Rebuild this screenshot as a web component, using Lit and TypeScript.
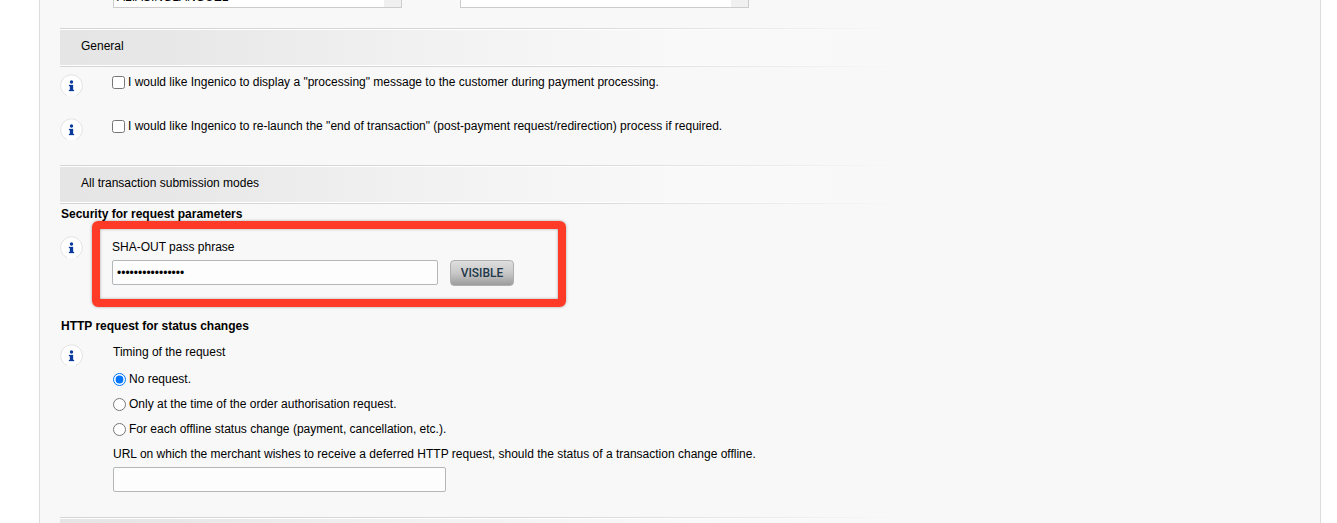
import { LitElement, html, css } from "lit";
import { customElement, property, state } from "lit/decorators.js";

@customElement("info-button")
class InfoButton extends LitElement {
  static styles = css`
    :host { display: block; width: 24px; height: 24px; }
    .info { display: block; width: 24px; height: 24px; padding: 0; border: 0; background: none; cursor: pointer; }
    svg { display: block; }
  `;
  @property() label = "Information";
  render() {
    return html`<button class="info" type="button" aria-label=${this.label}>
      <svg width="24" height="24" viewBox="0 0 24 24">
        <path d="M7 21.8A11 11 0 1 1 16 21.8Z" fill="#fff" />
        <path d="M7 21.5A10.8 10.8 0 1 1 16 21.5" fill="none" stroke="#e2e2e2" />
        <circle cx="11.5" cy="8" r="1.7" fill="#0a3b9c" />
        <path d="M9 11h4v5h1v1H9v-1h1v-4H9z" fill="#0a3b9c" stroke="#0a3b9c" stroke-width=".3" />
      </svg>
    </button>`;
  }
}

@customElement("section-bar")
class SectionBar extends LitElement {
  static styles = css`
    :host { display: block; }
    .bar {
      max-width: 840px; height: 39px; box-sizing: border-box; padding: 2px 0;
      background:
        linear-gradient(90deg, #d4d4d4 0%, #d8d8d8 60%, #f8f8f8 100%) top / 100% 1px no-repeat,
        linear-gradient(90deg, #d4d4d4 0%, #d8d8d8 60%, #f8f8f8 100%) bottom / 100% 1px no-repeat,
        linear-gradient(90deg, #fff 60%, #f8f8f8 100%);
    }
    .title {
      margin: 0; height: 35px; padding-left: 21px; font-size: 12px; font-weight: 400; line-height: 32px;
      background: linear-gradient(90deg, #e5e5e5 0%, #e7e7e7 12%, #f2f2f2 45%, #f9f9f9 75%, #f8f8f8 100%);
    }
  `;
  @property() heading = "";
  render() {
    return html`<div class="bar"><h2 class="title">${this.heading}</h2></div>`;
  }
}

@customElement("app-root")
class AppRoot extends LitElement {
  static styles = css`
    :host {
      display: block; height: 100vh; overflow: hidden; background: #fff; color: #000;
      font: 12px/16px "Liberation Sans", Arial, sans-serif;
    }
    .panel {
      min-height: 100vh; margin: 0 16px 0 39px; padding: 0 20px; box-sizing: border-box;
      border: solid #dcdcdc; border-width: 0 1px; background: #f8f8f8;
    }
    .lists { display: flex; align-items: flex-end; gap: 58px; height: 8px; margin: 0 0 20px 53px; overflow: hidden; }
    .list {
      flex: none; width: 289px; height: 80px; box-sizing: border-box; padding: 61px 0 0; border: 1px solid #ccc;
      border-radius: 0; overflow: hidden; outline: 0; font: inherit; color: #000;
      background: linear-gradient(#f0f0f0, #f0f0f0) right / 17px 100% no-repeat, #fff;
    }
    .list option { padding: 0 3px; line-height: 16px; min-height: 16px; }
    .row { display: grid; grid-template-columns: 24px 1fr; column-gap: 28px; align-items: start; }
    .check { height: 44px; }
    .checks { padding: 7px 0 3px; }
    .option { display: flex; align-items: flex-start; gap: 3px; }
    .option input { width: 13px; height: 13px; margin: 2px 0 0; flex: none; }
    .subhead { margin: 2px 0 0; padding-left: 1px; font-size: 12px; line-height: 16px; font-weight: 700; }
    .security { padding: 14px 0 0; }
    .marked { position: relative; padding-top: 3px; }
    .marked::before {
      content: ""; position: absolute; left: -20px; top: -15px; width: 474px; height: 86px; box-sizing: border-box;
      border: 8px solid #ff3b28; border-radius: 6px; pointer-events: none;
      box-shadow: 0 0 3px rgba(0, 0, 0, .35), inset 0 0 3px rgba(0, 0, 0, .35);
    }
    .label { display: block; }
    .phrase { display: flex; gap: 12px; align-items: flex-start; margin-top: 5px; }
    .text {
      width: 326px; height: 25px; box-sizing: border-box; border: 1px solid #b4b7b9; border-radius: 2px;
      padding: 0 4px; background: #fdfdfd; font: inherit; color: #000;
    }
    .url { display: block; width: 333px; margin-top: 5px; }
    .visible {
      min-width: 64px; height: 26px; padding: 0 8px; border: 1px solid #b0b0b0; border-radius: 4px;
      background: linear-gradient(#dedede, #c8c8c8 50%, #9c9c9c); color: #22384a;
      font: 500 12px/16px Roboto, sans-serif;
    }
    .http { margin-top: 32px; }
    .timing { padding: 10px 0 0; }
    .fields { padding-left: 1px; }
    fieldset { margin: 0; padding: 0; border: 0; min-width: 0; }
    legend { padding: 0; margin-bottom: 11px; }
    .radio { height: 25px; }
    .last { margin-top: 25px; }
  `;
  @state() private shown = false;

  render() {
    return html`
      <main class="panel">
        <div class="lists">
          <select class="list" multiple aria-label="Available parameters"><option>ALIASINGLANGUEL</option></select>
          <select class="list" multiple aria-label="Selected parameters"></select>
        </div>
        <section-bar heading="General"></section-bar>
        <div class="checks">
          <div class="row check">
            <info-button></info-button>
            <label class="option"><input type="checkbox" /><span>I would like Ingenico to display a "processing" message to the customer during payment processing.</span></label>
          </div>
          <div class="row check">
            <info-button></info-button>
            <label class="option"><input type="checkbox" /><span>I would like Ingenico to re-launch the "end of transaction" (post-payment request/redirection) process if required.</span></label>
          </div>
        </div>
        <section-bar heading="All transaction submission modes"></section-bar>
        <h3 class="subhead">Security for request parameters</h3>
        <div class="row security">
          <info-button></info-button>
          <div class="marked">
            <label class="label" for="phrase">SHA-OUT pass phrase</label>
            <div class="phrase">
              <input class="text" id="phrase" type=${this.shown ? "text" : "password"} value="Mysecretphrase16" />
              <button class="visible" type="button" @click=${() => (this.shown = !this.shown)}>VISIBLE</button>
            </div>
          </div>
        </div>
        <h3 class="subhead http">HTTP request for status changes</h3>
        <div class="row timing">
          <info-button></info-button>
          <div class="fields">
            <fieldset>
              <legend>Timing of the request</legend>
              <label class="option radio"><input type="radio" name="timing" checked /><span>No request.</span></label>
              <label class="option radio"><input type="radio" name="timing" /><span>Only at the time of the order authorisation request.</span></label>
              <label class="option radio"><input type="radio" name="timing" /><span>For each offline status change (payment, cancellation, etc.).</span></label>
            </fieldset>
            <label class="label" for="url">URL on which the merchant wishes to receive a deferred HTTP request, should the status of a transaction change offline.</label>
            <input class="text url" id="url" type="text" />
          </div>
        </div>
        <section-bar class="last"></section-bar>
      </main>
    `;
  }
}
